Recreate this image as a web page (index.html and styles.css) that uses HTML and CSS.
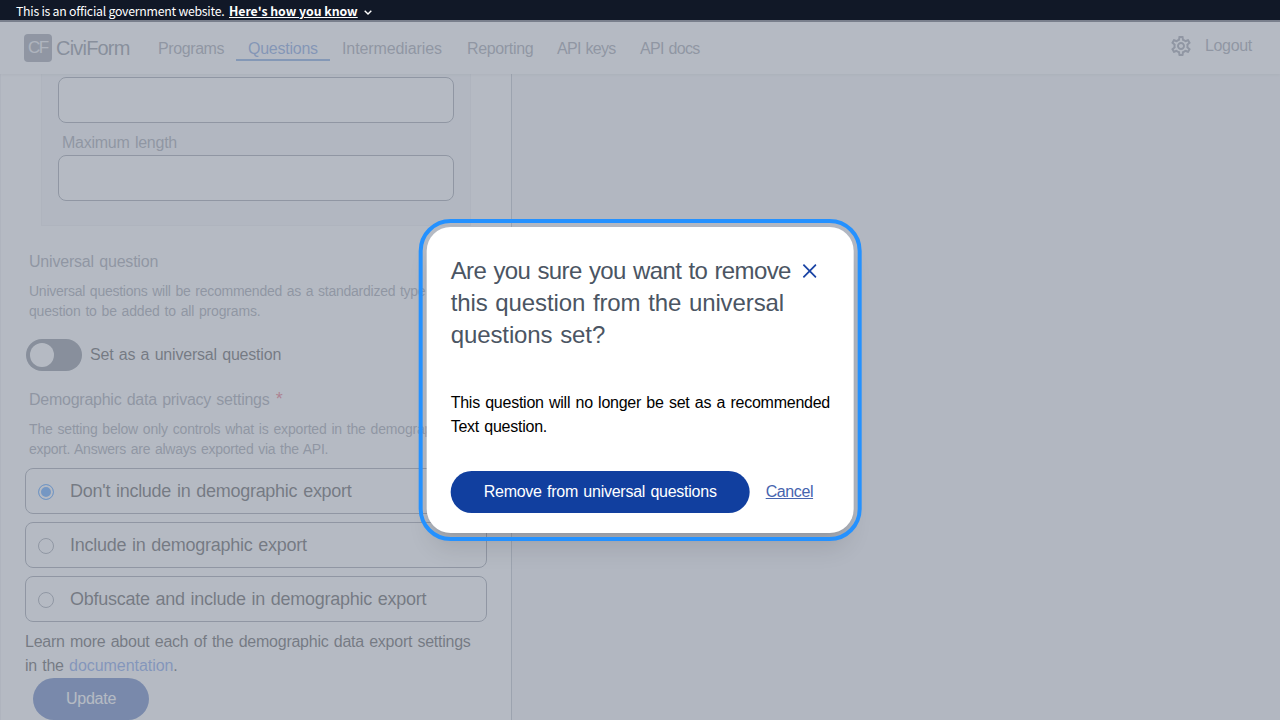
FILE: index.html
```
<!DOCTYPE html>
<html lang="en">
<head>
<meta charset="utf-8">
<title>CiviForm - Edit text question</title>
<link rel="stylesheet" href="styles.css">
</head>
<body>
<div class="page">
  <div class="banner-base"></div>
  <header class="header">
    <a class="brand"><span class="brand-logo">CF</span><span class="brand-name">CiviForm</span></a>
    <nav class="nav">
      <a class="nav-link programs">Programs</a>
      <a class="nav-link questions current">Questions</a>
      <a class="nav-link intermediaries">Intermediaries</a>
      <a class="nav-link reporting">Reporting</a>
      <a class="nav-link keys">API keys</a>
      <a class="nav-link docs">API docs</a>
    </nav>
    <div class="account">
      <svg class="gear" viewBox="0 0 24 24" width="24" height="24" fill="currentColor"><path d="M19.43 12.98c.04-.32.07-.64.07-.98 0-.34-.03-.66-.07-.98l2.11-1.65c.19-.15.24-.42.12-.64l-2-3.46c-.09-.16-.26-.25-.44-.25-.06 0-.12.01-.17.03l-2.49 1c-.52-.4-1.08-.73-1.69-.98l-.38-2.65C14.46 2.18 14.25 2 14 2h-4c-.25 0-.46.18-.49.42l-.38 2.65c-.61.25-1.17.59-1.69.98l-2.49-1c-.06-.02-.12-.03-.18-.03-.17 0-.34.09-.43.25l-2 3.46c-.13.22-.07.49.12.64l2.11 1.65c-.04.32-.07.65-.07.98 0 .33.03.66.07.98l-2.11 1.65c-.19.15-.24.42-.12.64l2 3.46c.09.16.26.25.44.25.06 0 .12-.01.17-.03l2.49-1c.52.4 1.08.73 1.69.98l.38 2.65c.03.24.24.42.49.42h4c.25 0 .46-.18.49-.42l.38-2.65c.61-.25 1.17-.59 1.69-.98l2.49 1c.06.02.12.03.18.03.17 0 .34-.09.43-.25l2-3.46c.12-.22.07-.49-.12-.64l-2.11-1.65zm-1.98-1.71c.04.31.05.52.05.73 0 .21-.02.43-.05.73l-.14 1.13.89.7 1.08.84-.7 1.21-1.27-.51-1.04-.42-.9.68c-.43.32-.84.56-1.25.73l-1.06.43-.16 1.13-.2 1.35h-1.4l-.19-1.35-.16-1.13-1.06-.43c-.43-.18-.83-.41-1.23-.71l-.91-.7-1.06.43-1.27.51-.7-1.21 1.08-.84.89-.7-.14-1.13c-.03-.31-.05-.54-.05-.74s.02-.43.05-.73l.14-1.13-.89-.7-1.08-.84.7-1.21 1.27.51 1.04.42.9-.68c.43-.32.84-.56 1.25-.73l1.06-.43.16-1.13.2-1.35h1.39l.19 1.35.16 1.13 1.06.43c.43.18.83.41 1.23.71l.91.7 1.06-.43 1.27-.51.7 1.21-1.07.85-.89.7.14 1.13zM12 8c-2.21 0-4 1.79-4 4s1.79 4 4 4 4-1.79 4-4-1.79-4-4-4zm0 6c-1.1 0-2-.9-2-2s.9-2 2-2 2 .9 2 2-.9 2-2 2z"/></svg>
      <a class="logout">Logout</a>
    </div>
  </header>
  <main class="main">
    <form class="editor">
      <div class="settings-box">
        <div class="text-input"></div>
        <div class="box-label">Maximum length</div>
        <div class="text-input"></div>
      </div>
      <div class="legend universal-legend">Universal question</div>
      <p class="hint universal-hint">Universal questions will be recommended as a standardized type of<br><span class="loose">question to be added to all programs.</span></p>
      <div class="toggle-row"><span class="toggle"><span class="knob"></span></span><span class="toggle-label">Set as a universal question</span></div>
      <div class="legend privacy-legend">Demographic data privacy settings <span class="required">*</span></div>
      <p class="hint privacy-hint"><span class="loose">The setting below only controls what is exported in the demographic</span><br>export. Answers are always exported via the API.</p>
      <div class="options">
        <label class="option"><span class="radio checked"></span><span>Don't include in demographic export</span></label>
        <label class="option"><span class="radio"></span><span>Include in demographic export</span></label>
        <label class="option"><span class="radio"></span><span>Obfuscate and include in demographic export</span></label>
      </div>
      <p class="learn">Learn more about each of the demographic data export settings<br>in the <a class="doc-link">documentation</a>.</p>
      <div class="button update">Update</div>
    </form>
  </main>
</div>
<div class="overlay"></div>
<div class="banner"><span class="banner-text">This is an official government website.</span><a class="banner-link">Here's how you know</a><svg class="chevron" viewBox="0 0 8 5" width="8" height="5"><path d="M.7.7 4 4 7.3.7" fill="none" stroke="#fff" stroke-width="1.4"/></svg></div>
<div class="modal">
  <div class="modal-head">
    <h2 class="modal-title"><span class="title-first">Are you sure you want to remove</span><br>this question from the universal<br>questions set?</h2>
    <svg class="close" viewBox="0 0 14 14" width="14" height="14"><path d="M.7.7 13.3 13.3M13.3.7.7 13.3" fill="none" stroke="#1a44a5" stroke-width="1.8"/></svg>
  </div>
  <p class="modal-body">This question will no longer be set as a recommended<br>Text question.</p>
  <div class="modal-actions"><div class="button remove">Remove from universal questions</div><a class="cancel">Cancel</a></div>
</div>
</body>
</html>
```
FILE: styles.css
```
* { box-sizing: border-box; }
body { margin: 0; width: 1280px; height: 720px; overflow: hidden; background: #f3f4f6; color: #000; font: 16px/24px "Liberation Sans", Arial, sans-serif; letter-spacing: -.25px; word-spacing: 1.1px; }
p, h2 { margin: 0; font-weight: normal; }
.page { display: flex; flex-direction: column; height: 720px; overflow: hidden; isolation: isolate; }
.banner-base { flex: none; height: 22px; background: #111827; }
.header { flex: none; height: 52px; display: flex; align-items: flex-start; background: #fff; color: #6b7280; box-shadow: 0 1px 3px rgba(0,0,0,.12); z-index: 1; }
.brand { display: flex; width: 122px; height: 28px; margin: 12px 0 0 24px; color: #4b5563; }
.brand-logo { width: 28px; height: 28px; padding-left: 4px; margin-right: 4px; border-radius: 4px; background: #6b7280; color: #e5e7eb; font-size: 17px; line-height: 28px; letter-spacing: -1.5px; }
.brand-name { font-size: 20px; line-height: 28px; white-space: nowrap; letter-spacing: -.8px; }
.nav { display: flex; margin-top: 12px; }
.nav-link { height: 27px; padding: 3px 12px 0; white-space: nowrap; }
.nav-link.current { color: #3b6fcc; border-bottom: 2px solid #3c78cc; }
.programs { width: 90px; letter-spacing: -.4px; }
.questions { width: 94px; }
.intermediaries { width: 125px; letter-spacing: -.1px; }
.reporting { width: 90px; letter-spacing: -.35px; }
.keys { width: 83px; }
.keys, .docs { letter-spacing: -.7px; }
.account { display: flex; align-items: center; gap: 12px; height: 24px; margin: 12px 28px 0 auto; }
.logout { width: 47px; letter-spacing: -.35px; }
.main { flex: 1; min-height: 0; }
.editor { width: 512px; height: 100%; overflow: hidden; padding: 0 24px; background: #fff; border-left: 1px solid #e5e7eb; border-right: 1px solid #9ca3af; }
.settings-box { width: 430px; height: 152px; margin-left: 16px; padding: 3px 16px 0; background: #f3f4f6; border: solid #e5e7eb; border-width: 0 1px 1px; }
.text-input { height: 46px; background: #fff; border: 1px solid #6b7280; border-radius: 8px; }
.box-label { height: 32px; padding: 8px 4px 0; color: #6b7280; }
.legend { margin-left: 4px; height: 24px; color: #6b7280; white-space: nowrap; }
.universal-legend { margin-top: 24px; letter-spacing: -.2px; }
.required { margin-left: 1px; color: #e01f3d; font-size: 18px; line-height: 1; }
.hint { margin: 8px 0 0 4px; color: #6b7280; font-size: 14px; line-height: 20px; letter-spacing: -.25px; white-space: nowrap; }
.universal-hint { margin-top: 7px; }
.loose { letter-spacing: -.17px; }
.toggle-row { display: flex; align-items: center; gap: 8px; height: 32px; margin: 18px 0 0 1px; }
.toggle-label { letter-spacing: -.2px; }
.toggle { width: 56px; height: 32px; padding: 4px; border-radius: 16px; background: #4b5563; }
.knob { display: block; width: 24px; height: 24px; border-radius: 50%; background: #fff; }
.privacy-legend { margin-top: 17px; }
.privacy-hint { margin-top: 7px; }
.options { display: flex; flex-direction: column; gap: 8px; margin-top: 9px; }
.option { display: flex; align-items: center; gap: 16px; height: 46px; padding-left: 12px; border: 1px solid #6b7280; border-radius: 8px; font-size: 18px; line-height: 28px; letter-spacing: -.27px; white-space: nowrap; }
.radio { width: 16px; height: 16px; margin-top: 2px; border: 1px solid #6b7280; border-radius: 50%; background: #fff; }
.radio.checked { border: 1px solid #0075ff; background: #0075ff; box-shadow: inset 0 0 0 2px #fff; }
.learn { margin-top: 8px; white-space: nowrap; }
.doc-link { color: #3b6fe0; letter-spacing: -.05px; }
.button { height: 42px; border-radius: 21px; background: #113f9f; color: #fff; line-height: 42px; text-align: center; white-space: nowrap; }
.update { width: 116px; margin-left: 8px; }
.overlay { position: absolute; inset: 20px 0 0; background: rgba(156,163,175,.75); }
.banner { position: absolute; inset: 0 0 auto; display: flex; height: 20px; padding-left: 16px; background: #111827; color: #fff; font: 12.3px/22px "Noto Sans CJK SC", sans-serif; letter-spacing: -.25px; word-spacing: 0; white-space: nowrap; }
.banner-text { width: 213px; }
.banner-link { font-weight: 700; letter-spacing: -.02px; text-decoration: underline; width: 129px; }
.chevron { margin: 10px 0 0 6px; }
.modal { position: absolute; left: 50%; top: 227px; width: 426.67px; height: 306px; transform: translateX(-50%); padding: 28px 24px 0; border-radius: 24px; background: #fff; outline: 4px solid #2491ff; outline-offset: 4px; box-shadow: 0 20px 25px -5px rgba(0,0,0,.1), 0 8px 10px -6px rgba(0,0,0,.1); }
.modal-head { display: flex; }
.modal-title { width: 352px; color: #4b5563; font-size: 24px; line-height: 32px; letter-spacing: -.1px; white-space: nowrap; }
.title-first { letter-spacing: -.6px; }
.close { margin-top: 9px; }
.modal-body { margin-top: 40px; white-space: nowrap; }
.modal-actions { display: flex; align-items: center; gap: 16px; margin-top: 32px; }
.remove { width: 299px; }
.cancel { color: #4664ae; letter-spacing: -.4px; text-decoration: underline; }
```
